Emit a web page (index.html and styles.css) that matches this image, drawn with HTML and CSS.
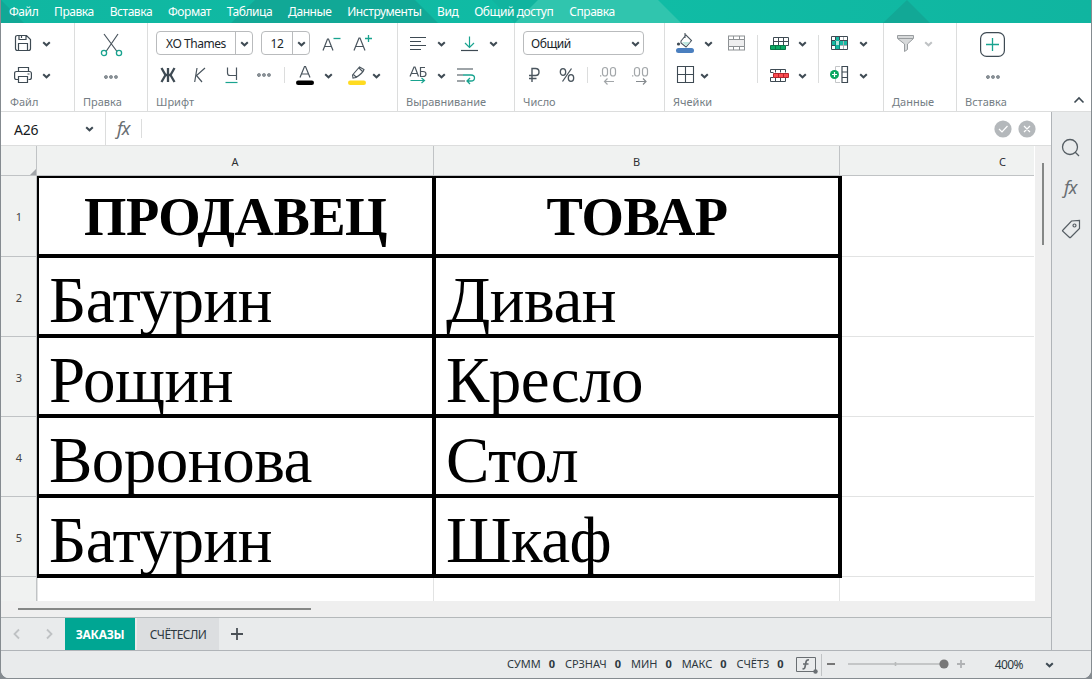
FILE: index.html
```html
<!DOCTYPE html>
<html lang="ru">
<head>
<meta charset="utf-8">
<title>Таблица</title>
<link rel="stylesheet" href="styles.css">
</head>
<body>
<svg class="defs" width="0" height="0">
  <symbol id="chev" viewBox="0 0 9 6"><path d="M1.2 1.2 4.5 4.3 7.8 1.2" fill="none" stroke="currentColor" stroke-width="2"/></symbol>
  <symbol id="dots" viewBox="0 0 14 4"><g fill="none" stroke="#4a555e" stroke-width="1.1"><circle cx="2" cy="2" r="1.2"/><circle cx="7" cy="2" r="1.2"/><circle cx="12" cy="2" r="1.2"/></g></symbol>
</svg>
<div class="window">
  <header class="menubar">
    <svg class="menubar-art" width="1090" height="23" viewBox="1 0 1090 23">
      <path fill="#11a896" d="M1 0 24 23H1zM255 0H415L438 23H231z"/>
      <path fill="#12ad99" d="M515 23 492 0H538z" opacity=".5"/>
      <path fill="#30c5ae" d="M538 0H658L681 23H515z"/>
      <path fill="#12a896" d="M907 0 930 23H883z"/>
    </svg>
    <nav class="menu">
      <span>Файл</span><span>Правка</span><span>Вставка</span><span>Формат</span><span>Таблица</span><span>Данные</span><span>Инструменты</span><span>Вид</span><span>Общий доступ</span><span>Справка</span>
    </nav>
  </header>

  <section class="ribbon">
    <div class="group g-file">
      <div class="row">
        <svg width="18" height="18" fill="none" stroke="#3e4a53" stroke-width="1.2"><path d="M3.500 1.500H12.500L16.500 5.500V14.500Q16.500 16.500 14.500 16.500H3.500Q1.500 16.500 1.500 14.500V3.500Q1.500 1.500 3.500 1.500zM5 1.500V5.500H12V1.500M4.500 16V9.500H13.500V16M7.500 2V4"/></svg>
        <svg class="chev m10"><use href="#chev"/></svg>
      </div>
      <div class="row">
        <svg width="18" height="18" fill="none" stroke="#3e4a53" stroke-width="1.200"><path d="M4.500 5.500V1.500H14.500V5.500M4.500 13.500H2.500Q.6 13.500.6 11.500V7.500Q.6 5.500 2.500 5.500H15.500Q17.400 5.500 17.400 7.500V11.500Q17.400 13.500 15.500 13.500H14.500M4.500 10.500H13.500V16.500H4.500zM13.500 8H15.500"/></svg>
        <svg class="chev m10"><use href="#chev"/></svg>
      </div>
      <div class="label">Файл</div>
    </div>
    <div class="group g-edit">
      <div class="row center">
        <svg class="low" width="22" height="24" fill="none"><path d="M4 1 17 18.500M18 1 6 18.500" stroke="#4a555e" stroke-width="1.200"/><g stroke="#19a38f" stroke-width="1.300"><circle cx="4" cy="20" r="2.600"/><circle cx="19" cy="20" r="2.600"/></g></svg>
      </div>
      <div class="row center"><svg class="dots low"><use href="#dots"/></svg></div>
      <div class="label">Правка</div>
    </div>
    <div class="group g-font">
      <div class="row">
        <div class="combo font-name"><span>XO Thames</span><i><svg class="chev"><use href="#chev"/></svg></i></div>
        <div class="combo font-size"><span>12</span><i><svg class="chev"><use href="#chev"/></svg></i></div>
        <svg class="m12" width="18" height="20" fill="none"><path d="M1 17.500 5.500 6H6.500L11 17.500M2.500 13.500H9.500" stroke="#4a555e" stroke-width="1.200"/><path d="M11.500 5.500H18.500" stroke="#19a38f" stroke-width="1.300"/></svg>
        <svg class="m13" width="21" height="20" fill="none"><path d="M1 17.500 6 5H7L12 17.500M3 13.500H10" stroke="#4a555e" stroke-width="1.200"/><path d="M12 5.500H19M15.500 2V9" stroke="#19a38f" stroke-width="1.300"/></svg>
      </div>
      <div class="row letters">
        <svg width="16" height="18" fill="none" stroke="#3e4a53" stroke-width="2.300"><path d="M8 2V16M1.500 2 5.500 9H10.500L14.500 2M5.500 9 1.500 16M10.500 9 14.500 16"/></svg>
        <svg class="m17" width="13" height="18" fill="none" stroke="#4a555e" stroke-width="1.200"><path d="M4 2 1.700 16M12 2 3.500 9.500 9 16"/></svg>
        <svg class="m19" width="13" height="18" fill="none" stroke="#4a555e" stroke-width="1.200"><path d="M2.500 1.500V7Q2.500 9.500 5 9.500H11.500M11.500 1.500V14"/><path d="M.5 16.500H12.500" stroke="#19a38f"/></svg>
        <svg class="dots m19"><use href="#dots"/></svg>
        <b class="split m13"></b>
        <svg class="m11" width="18" height="20" fill="none"><path d="M4 12.500 8.500 1.500H9.500L14 12.500M5.500 9H12.500" stroke="#4a555e" stroke-width="1.200"/><rect y="15.500" width="18" height="4.500" rx="2.200" fill="#000"/></svg>
        <svg class="chev m10"><use href="#chev"/></svg>
        <svg class="m15" width="18" height="20" fill="none"><path d="M4.500 10 11.500 2 16 4.500Q15 8 8 12.500L5 13zM5 9 8.500 12.500M11 3 15 7" stroke="#4a555e" stroke-width="1.100"/><rect y="15.500" width="18" height="4.500" rx="2.200" fill="#ffdb20"/></svg>
        <svg class="chev m6"><use href="#chev"/></svg>
      </div>
      <div class="label">Шрифт</div>
    </div>
    <div class="group g-align">
      <div class="row">
        <svg width="18" height="16" fill="none" stroke="#3e4a53" stroke-width="1.200"><path d="M1 2.500H17M1 6.500H12M1 10.500H17M1 14.500H12"/></svg>
        <svg class="chev m10"><use href="#chev"/></svg>
        <svg class="m14" width="18" height="16" fill="none"><path d="M1 15.500H18" stroke="#3e4a53" stroke-width="1.200"/><path d="M9.500 1.500V12.500M5 8 9.500 12.500 14 8" stroke="#19a38f" stroke-width="1.200"/></svg>
        <svg class="chev m11"><use href="#chev"/></svg>
      </div>
      <div class="row">
        <svg width="18" height="18" fill="none"><path d="M1 10.500 5 1H6L9.500 10.500M2.500 7.500H8.500M16 1.500H11.500V10.500H14Q17 10.500 17 8T14 5.500H11.500" stroke="#4a555e" stroke-width="1.200"/><path d="M1.500 14.500H15M12.500 12 15.500 14.500 12.500 17" stroke="#19a38f" stroke-width="1.200"/></svg>
        <svg class="chev m10"><use href="#chev"/></svg>
        <svg class="m10" width="20" height="17" fill="none"><path d="M1 2H17M1 8H7M1 14H9" stroke="#3e4a53" stroke-width="1.200"/><path d="M7 8H15Q18.500 8 18.500 11T15 14H11M14 11 11 14 14 17" stroke="#19a38f" stroke-width="1.300"/></svg>
      </div>
      <div class="label">Выравнивание</div>
    </div>
    <div class="group g-number">
      <div class="row">
        <div class="combo format"><span>Общий</span><i><svg class="chev"><use href="#chev"/></svg></i></div>
      </div>
      <div class="row">
        <svg width="13" height="18" fill="none" stroke="#4a555e" stroke-width="1.400"><path d="M4 16V2.500H7.500Q11 2.500 11 6T7.500 9.500H1M1 12.500H8.500"/></svg>
        <svg class="m18" width="16" height="18" fill="none" stroke="#4a555e" stroke-width="1.300"><ellipse cx="4" cy="6" rx="2.700" ry="3.300"/><ellipse cx="12" cy="12" rx="2.700" ry="3.300"/><path d="M12.500 2.500 3.500 15.500"/></svg>
        <b class="split m12"></b>
        <svg class="m12" width="17" height="19" fill="none" stroke="#a2a6a9" stroke-width="1.200"><rect x="2.500" y="1.500" width="5" height="8.500" rx="2.500"/><rect x="10.500" y="1.500" width="5" height="8.500" rx="2.500"/><path d="M0 9.800H1.300M4.500 15.500H14M7.500 12.500 4.500 15.500 7.500 18.500"/></svg>
        <svg class="m15" width="17" height="19" fill="none" stroke="#a2a6a9" stroke-width="1.200"><rect x="2.500" y="1.500" width="5" height="8.500" rx="2.500"/><rect x="10.500" y="1.500" width="5" height="8.500" rx="2.500"/><path d="M0 9.800H1.300" /><path d="M4 15.500H14M11 12.500 14 15.500 11 18.500" stroke="#858a8e"/></svg>
      </div>
      <div class="label">Число</div>
    </div>
    <div class="group g-cells">
      <div class="cell-tools">
        <div class="row">
          <svg width="19" height="20" fill="none"><path d="M5 8 10 2 15.500 7.500 10 14 5 10zM9 5V0" stroke="#4a555e" stroke-width="1.100"/><path d="M6 9H14L10 13z" fill="#bfe8df"/><circle cx="2.500" cy="11" r="1.600" fill="#3e4a53"/><rect x="0" y="15" width="18" height="5" rx="2.500" fill="#4a7fbf"/></svg>
          <svg class="chev m9"><use href="#chev"/></svg>
          <svg class="m14" width="18" height="16" fill="none" stroke="#8d9194"><rect x="1.500" y="1" width="16" height="14"/><path fill="#eeeeef" d="M1.500 4.500H17.500V11.500H1.500zM6.500 1V4.500M12.500 1V4.500M6.500 11.500V15M12.500 11.500V15"/></svg>
        </div>
        <div class="row">
          <svg width="18" height="18" fill="none" stroke="#3e4a53" stroke-width="1.100"><path d="M1.500 .5H17.500V16.500H1.500zM1.500 8.500H17.500M9.500 .5V16.500"/></svg>
          <svg class="chev m6"><use href="#chev"/></svg>
        </div>
      </div>
      <b class="split tall"></b>
      <div class="cell-tools">
        <div class="row">
          <svg width="19" height="14" stroke="#3e4a53"><path fill="none" d="M3.500 9V1.500H18.500V9.500H16M3.500 5.500H18.500M8.500 1.500V9M13.500 1.500V9"/><path fill="#0aaa64" stroke="#0b7547" d="M.5 9.500H15.500V13.500H.5zM5.500 9.500V13.500M10.500 9.500V13.500"/></svg>
          <svg class="chev m9"><use href="#chev"/></svg>
        </div>
        <div class="row">
          <svg width="19" height="14" stroke="#3e4a53"><path fill="none" d="M3.500 4.500H.5V1.500H15.500V4.500M5.500 1.500V4.500M10.500 1.500V4.500M3.500 9.500H.5V13.500H15.500V9.500M5.500 9.500V13.500M10.500 9.500V13.500"/><path fill="#fb4b50" stroke="#b3262c" d="M3.500 5.500H18.500V9.500H3.500zM8.500 5.500V9.500M13.500 5.500V9.500"/></svg>
          <svg class="chev m9"><use href="#chev"/></svg>
        </div>
      </div>
      <b class="split tall second"></b>
      <div class="cell-tools third">
        <div class="row">
          <svg width="18" height="14" fill="none"><path fill="#19b8a3" d="M5.500 1H9.500V13H5.500zM1.500 5H17.500V9H1.500z"/><path stroke="#a9b2b5" d="M13.500 1V13M9.500 9.500H17"/><path stroke="#3e4a53" d="M1.500 .5H17.500V13.500H1.500zM2 4.500H5M10 4.500H17M2 9.500H5M5.500 1V4M9.500 1V4"/><path stroke="#078b7a" d="M5.500 4.500V13M9.500 4.500V13"/><path fill="#b8e5dd" d="M6 5H9V9H6z"/></svg>
          <svg class="chev m11"><use href="#chev"/></svg>
        </div>
        <div class="row">
          <svg width="18" height="18" fill="none"><path stroke="#c4c6c8" d="M10 .5H5.500V16.500H10"/><path stroke="#3e4a53" stroke-width="1.200" d="M12 .5H17.500V16.500H12zM12 6H17.500M12 11.500H17.500"/><circle cx="4.500" cy="8.500" r="4.500" fill="#0aa660"/><path stroke="#fff" stroke-width="1.200" d="M2 8.500H7M4.500 6V11"/></svg>
          <svg class="chev m11"><use href="#chev"/></svg>
        </div>
      </div>
      <div class="label">Ячейки</div>
    </div>
    <div class="group g-data">
      <div class="row">
        <svg width="18" height="18"><path fill="#d7d9da" stroke="#999da0" d="M.5 1.500H16.500V4.500L10.500 10V15.500L7.500 17.500V10L.5 4.500z"/><path d="M1 4.500H16" stroke="#999da0"/></svg>
        <svg class="chev m9 faded"><use href="#chev"/></svg>
      </div>
      <div class="row"></div>
      <div class="label">Данные</div>
    </div>
    <div class="group g-insert">
      <div class="row">
        <svg class="low" width="25" height="25" fill="none"><rect x=".6" y=".6" width="23.800" height="23.800" rx="6" stroke="#3e4a53" stroke-width="1.200"/><path d="M6 12.500H19M12.500 6V19" stroke="#19a38f" stroke-width="1.300"/></svg>
      </div>
      <div class="row"><svg class="dots low m6"><use href="#dots"/></svg></div>
      <div class="label">Вставка</div>
    </div>
    <svg class="collapse" width="12" height="8"><path d="M1.500 6.500 6 2 10.500 6.500" fill="none" stroke="#3e4a53" stroke-width="1.600"/></svg>
  </section>

  <div class="body">
    <main class="workspace">
      <div class="formula-bar">
        <div class="cell-name"><span>A26</span><svg class="chev"><use href="#chev"/></svg></div>
        <em class="fx">fx</em>
        <b class="split"></b>
        <svg class="confirm" width="42" height="18"><circle cx="9" cy="9" r="8.600" fill="#b4b8bb"/><circle cx="33" cy="9" r="8.600" fill="#b4b8bb"/><path d="M5 9 8 12 13.500 6M30 6 36 12M36 6 30 12" fill="none" stroke="#fff" stroke-width="1.200"/></svg>
      </div>
      <div class="sheet-area">
        <div class="sheet">
          <div class="corner"><svg width="6" height="6"><path d="M6 0V6H0z" fill="#a0a4a8"/></svg></div>
          <div class="col-heads"><span>A</span><span>B</span><span>C</span></div>
          <div class="row-heads"><span>1</span><span>2</span><span>3</span><span>4</span><span>5</span><span></span></div>
          <div class="cells">
            <div class="table">
              <div class="th">ПРОДАВЕЦ</div><div class="th">ТОВАР</div>
              <div class="td">Батурин</div><div class="td">Диван</div>
              <div class="td">Рощин</div><div class="td">Кресло</div>
              <div class="td">Воронова</div><div class="td">Стол</div>
              <div class="td">Батурин</div><div class="td">Шкаф</div>
            </div>
            <div class="col-c"><i></i><i></i><i></i><i></i><i></i></div>
            <div class="tail"><i></i><i></i><i></i></div>
          </div>
        </div>
        <div class="vscroll"><i></i></div>
      </div>
      <div class="hscroll"><i></i></div>
      <div class="tabs">
        <svg class="arrows" width="42" height="12" fill="none" stroke="#bfc2c4" stroke-width="1.800"><path d="M7 1.500 2.500 6 7 10.500M35 1.500 39.500 6 35 10.500"/></svg>
        <span class="tab active">ЗАКАЗЫ</span>
        <span class="tab">СЧЁТЕСЛИ</span>
        <svg class="add" width="12" height="12"><path d="M0 6H12M6 0V12" stroke="#4a5056" stroke-width="1.800"/></svg>
      </div>
    </main>
    <aside class="sidebar">
      <svg width="20" height="20" fill="none" stroke="#555d63" stroke-width="1.300"><circle cx="9" cy="9" r="7.500"/><path d="M14 14 18 18"/></svg>
      <em class="fx">fx</em>
      <svg width="20" height="20" fill="none" stroke="#555d63" stroke-width="1.200"><path d="M2 10 10.500 1 18.500 .5 18.500 8.500 9.500 17.500Q9 18 8 17L1.500 11Q1.300 10.500 2 10z"/><circle cx="13.500" cy="5.500" r="1.500"/></svg>
    </aside>
  </div>

  <footer class="status">
    <div class="stats">
      <span>СУММ<b>0</b></span><span>СРЗНАЧ<b>0</b></span><span>МИН<b>0</b></span><span>МАКС<b>0</b></span><span>СЧЁТЗ<b>0</b></span>
    </div>
    <svg class="func" width="22" height="18" fill="none" stroke="#696e72"><path d="M.5 1.500H19.500V15.500H.5z"/><path d="M13 4Q10.500 3.500 10 6L9 11Q8.500 13.500 6.500 12.500M7 8H12.500" stroke-width="1.700"/><circle cx="19.500" cy="15.500" r="2.200" fill="#696e72" stroke="none"/></svg>
    <b class="split"></b>
    <svg class="zoom" width="140" height="12"><path d="M1 6H9" stroke="#777" stroke-width="2"/><path d="M22 6H118M69.500 4V8" stroke="#b8babb" stroke-width="1.600"/><circle cx="118" cy="6" r="4.600" fill="#777"/><path d="M131 6H139M135 2V10" stroke="#b0b2b4" stroke-width="1.800"/></svg>
    <span class="percent">400%</span>
    <svg class="chev"><use href="#chev"/></svg>
  </footer>
</div>
</body>
</html>
```

FILE: styles.css
```css
* { box-sizing: border-box; }
body { margin: 0; width: 1092px; height: 679px; overflow: hidden; background: #858b90; font: 12px "Noto Sans", sans-serif; color: #2d3840; }
svg { display: block; flex: none; overflow: visible; }
.defs { position: absolute; }
i { font-style: normal; display: block; }
.window { width: 1090px; height: 678px; margin-left: 1px; display: flex; flex-direction: column; background: #fff; border-radius: 0 0 8px 8px; overflow: hidden; }

.menubar { height: 23px; flex: none; display: grid; background: linear-gradient(90deg, #10b7a1, #10bca5 60%, #10b5a0); }
.menubar-art, .menu { grid-area: 1 / 1; }
.menu { display: flex; gap: 15.8px; padding-left: 8px; line-height: 23px; letter-spacing: -.43px; color: #fff; white-space: nowrap; z-index: 1; }

.ribbon { height: 89px; flex: none; display: flex; border-bottom: 1px solid #dcdddd; }
.group { flex: none; border-right: 1px solid #dcdddd; padding-top: 4px; display: flex; flex-direction: column; }
.row { height: 32px; flex: none; display: flex; align-items: center; }
.row.center { justify-content: center; }
.label { color: #747d84; line-height: 20px; padding-top: 1px; margin-left: 8px; white-space: nowrap; font-size: 11px; }
.chev { width: 9px; height: 6px; color: #3e4a53; margin-top: 1px; }
.faded { color: #bfc2c4; }
.dots { width: 14px; height: 4px; }
.low { margin-top: 3px; }
.split { width: 1px; height: 16px; background: #dcdddd; flex: none; }
.m6 { margin-left: 6px; } .m9 { margin-left: 9px; } .m10 { margin-left: 10px; } .m11 { margin-left: 11px; }
.m12 { margin-left: 12px; } .m13 { margin-left: 13px; } .m14 { margin-left: 14px; } .m15 { margin-left: 15px; }
.m17 { margin-left: 17px; } .m18 { margin-left: 18px; } .m19 { margin-left: 19px; }
.g-file { width: 74px; } .g-file .row { padding-left: 13px; }
.g-edit { width: 73px; }
.g-font { width: 250px; }
.g-font .row { padding-left: 8px; } .g-font .letters { padding-left: 12px; }
.g-align { width: 117px; } .g-align .row { padding-left: 11px; }
.g-number { width: 150px; }
.g-number .row { padding-left: 13px; } .g-number .row:first-child { padding-left: 8px; }
.g-cells { width: 219px; display: grid; grid-template: 64px 21px / 92px 1px 60px 1px 1fr; }
.g-cells .cell-tools { padding-left: 12px; }
.g-cells .cell-tools:first-child { padding-left: 11px; }
.g-cells .third { padding-left: 11px; }
.g-cells .label { grid-column: 1 / -1; }
.split.tall { height: 48px; margin-top: 8px; }
.g-data { width: 73px; } .g-data .row { padding-left: 13px; }
.g-insert { width: 110px; border: 0; } .g-insert .row { padding-left: 23px; }
.g-file .label { margin-left: 9px; }
.combo { height: 24px; border: 1px solid #b9bbbd; border-radius: 4px; display: flex; align-items: center; line-height: 23px; letter-spacing: -.45px; color: #20262b; }
.combo i { height: 22px; width: 17px; display: flex; align-items: center; justify-content: center; margin-left: auto; border-left: 1px solid #b9bbbd; }
.combo span { flex: 1; text-align: center; }
.font-name { width: 97px; }
.font-size { width: 49px; margin-left: 8px; }
.format { width: 121px; }
.combo.format span { text-align: left; padding-left: 7px; }
.combo.format i { border: 0; width: 12px; justify-content: flex-start; }
.collapse { margin: 73px 6px 0 auto; }

.body { flex: 1; min-height: 0; display: flex; }
.workspace { width: 1051px; flex: none; border-right: 1px solid #b0b4b8; display: flex; flex-direction: column; }
.formula-bar { height: 34px; flex: none; display: flex; align-items: center; border-bottom: 1px solid #dcdddd; }
.cell-name { width: 105px; height: 33px; border-right: 1px solid #dcdddd; display: flex; align-items: center; justify-content: space-between; padding: 2px 11px 0 13px; font-size: 14px; letter-spacing: -.2px; color: #15191c; }
.cell-name .chev { margin-top: -2px; }
.fx { width: 18px; line-height: 18px; font-size: 18px; letter-spacing: -1px; color: #6a6f73; }
.formula-bar .fx { margin: -2px 0 0 11px; }
.formula-bar .split { height: 19px; margin-left: 6px; }
.confirm { margin: 0 15px 0 auto; }
.sheet-area { height: 455px; flex: none; display: flex; }
.sheet { width: 1033px; flex: none; display: grid; grid-template: 30px 425px / 36px 997px; }
.corner { background: #f0f2f1; border: solid #c0c3c5; border-width: 0 1px 1px 0; display: flex; align-items: flex-end; justify-content: flex-end; }
.col-heads { display: grid; grid-template-columns: 397px 406px 194px; background: #f0f2f1; border-bottom: 1px solid #c0c3c5; }
.col-heads span { border-right: 1px solid #c0c3c5; text-align: center; line-height: 31px; height: 29px; font-size: 11px; color: #2d3034; }
.col-heads span:last-child { border: 0; padding-left: 131px; }
.row-heads { display: grid; grid-template-rows: 81px repeat(4, 80px) 24px; background: #f0f2f1; border-right: 1px solid #c0c3c5; }
.row-heads span { border-bottom: 1px solid #c0c3c5; display: flex; align-items: center; justify-content: center; padding: 1px 0 0 1px; font-size: 11px; color: #444; }
.row-heads span:last-child { border: 0; }
.cells { display: grid; grid-template: 402px 23px / 805px 192px; }
.table { display: grid; grid-template: repeat(5, 76px) / 393px 402px; gap: 4px; border: solid #000; border-width: 2px 4px 4px 2px; background: #000; }
.th, .td { background: #fff; font-family: "Liberation Serif", serif; color: #000; white-space: nowrap; letter-spacing: -.5px; }
.th { font-size: 54.500px; line-height: 77px; font-weight: bold; text-align: center; }
.td { font-size: 65px; line-height: 85px; height: 76px; padding-left: 10px; }
.col-c { display: grid; grid-template-rows: 81px repeat(4, 80px); }
.col-c i { border-bottom: 1px solid #e2e3e3; }
.tail { grid-column: 1 / -1; display: grid; grid-template-columns: 1px 396px 406px; }
.tail i { border-right: 1px solid #e2e3e3; }
.vscroll { width: 17px; padding: 17px 0 0 7px; background: #efefef; border-left: 1px solid #fff; }
.vscroll i { width: 2px; height: 82px; background: #858786; }
.hscroll { height: 16px; flex: none; background: #efefef; padding: 7px 0 0 17px; }
.hscroll i { width: 293px; height: 2px; background: #858786; }
.tabs { height: 33px; flex: none; border-top: 1px solid #b4b8ba; background: #e9ebec; display: flex; align-items: center; line-height: 33px; }
.arrows { margin-left: 11px; }
.tab { height: 32px; width: 82px; text-align: center; background: #dcdee0; color: #2d3840; margin-left: 2px; letter-spacing: -.55px; }
.tab.active { width: 70px; margin-left: 11px; background: #00a693; color: #fff; font-weight: bold; letter-spacing: -.3px; }
.add { margin-left: 12px; }
.sidebar { flex: 1; background: #e9ebec; display: flex; flex-direction: column; align-items: flex-start; gap: 22px; padding: 26px 0 0 9px; }
.sidebar .fx { margin: -2px 0 2px 3px; }
.status { height: 28px; flex: none; background: #e9ebec; border-top: 1px solid #b0b4b8; display: flex; align-items: center; }
.stats { display: flex; gap: 10px; margin-left: 506px; font-size: 11px; line-height: 26px; padding-bottom: 2px; letter-spacing: -.03px; white-space: nowrap; }
.stats b { margin-left: 8px; }
.func { margin-left: 12px; }
.status .split { height: 22px; margin-left: 3px; background: #c0c3c5; }
.zoom { margin-left: 4px; margin-bottom: 1px; }
.percent { margin-left: 29px; letter-spacing: -.6px; }
.status .chev { margin-left: 22px; margin-top: 0; }
```
